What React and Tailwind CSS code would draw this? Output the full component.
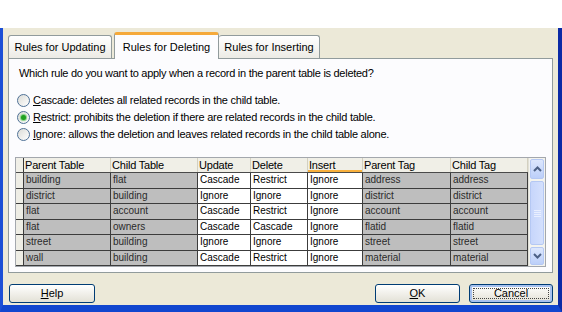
import React from 'react';

const cols = [
  { name: 'Parent Table', w: 'w-[87px]', gray: true },
  { name: 'Child Table', w: 'w-[87px]', gray: true },
  { name: 'Update', w: 'w-[53px]', gray: false },
  { name: 'Delete', w: 'w-[57px]', gray: false },
  { name: 'Insert', w: 'w-[55px]', gray: false, hover: true },
  { name: 'Parent Tag', w: 'w-[88px]', gray: true },
  { name: 'Child Tag', w: 'w-[77px]', gray: true },
];

const rows = [
  ['building', 'flat', 'Cascade', 'Restrict', 'Ignore', 'address', 'address'],
  ['district', 'building', 'Ignore', 'Ignore', 'Ignore', 'district', 'district'],
  ['flat', 'account', 'Cascade', 'Restrict', 'Ignore', 'account', 'account'],
  ['flat', 'owners', 'Cascade', 'Cascade', 'Ignore', 'flatid', 'flatid'],
  ['street', 'building', 'Ignore', 'Ignore', 'Ignore', 'street', 'street'],
  ['wall', 'building', 'Cascade', 'Restrict', 'Ignore', 'material', 'material'],
];

function Radio({ checked, mnemonic, rest }) {
  return (
    <div className="flex items-center h-[13px] ml-[8px]">
      <div className="w-[13px] h-[13px] rounded-full border border-[#4f7196] bg-gradient-to-br from-[#dcdcd7] to-white flex items-center justify-center">
        {checked && <div className="w-[5px] h-[5px] rounded-full bg-[#21a121] shadow-[0_0_1px_1px_#7fd07f]" />}
      </div>
      <span className="ml-[3px] text-[11px] tracking-[-0.25px] leading-[13px]">
        <span className="underline">{mnemonic}</span>
        {rest}
      </span>
    </div>
  );
}

function XpButton({ children, className, isDefault }) {
  return (
    <div
      className={`relative h-[19px] rounded-[3px] border border-[#003c74] bg-gradient-to-b from-white to-[#e3e1d6] flex items-center justify-center text-[11px] ${className} ${isDefault ? 'shadow-[inset_0_0_0_2px_#a7c1ef]' : ''}`}
    >
      {isDefault && <span className="absolute inset-[3px] border border-dotted border-[#444]" />}
      {children}
    </div>
  );
}

function ScrollArrow({ up }) {
  return (
    <svg width="9" height="6" viewBox="0 0 9 6">
      <path
        d={up ? 'M1 5 L4.5 1.5 L8 5' : 'M1 1 L4.5 4.5 L8 1'}
        fill="none"
        stroke="#4d6185"
        strokeWidth="2"
      />
    </svg>
  );
}

export default function App() {
  return (
    <div className="w-[562px] h-[312px] bg-white flex flex-col overflow-hidden font-['Liberation_Sans',Arial,sans-serif] text-black">
      <div className="h-[28px] shrink-0" />
      <div className="flex-1 flex flex-col bg-[#ece9d8] border-l-[3px] border-l-[#1c4fd6] border-r-[4px] border-r-[#0b2aa5] border-b-[7px] border-b-[#1146cf]">
        {/* tabs */}
        <div className="flex items-end ml-[5px] mt-[4px] h-[26px] relative z-10">
          <div className="w-[104px] h-[23px] rounded-t-[3px] border border-b-0 border-[#919b9c] bg-gradient-to-b from-white to-[#ecebe5] flex items-center justify-center text-[11px]">
            Rules for Updating
          </div>
          <div className="ml-[2px] w-[105px] h-[27px] -mb-px rounded-t-[3px] border-x border-[#919b9c] border-t-[3px] border-t-[#f5a93a] bg-[#fcfcfe] flex items-center justify-center text-[11px]">
            Rules for Deleting
          </div>
          <div className="w-[101px] h-[23px] rounded-t-[3px] border border-b-0 border-l-0 border-[#919b9c] bg-gradient-to-b from-white to-[#ecebe5] flex items-center justify-center text-[11px]">
            Rules for Inserting
          </div>
        </div>

        {/* panel */}
        <div className="mx-[5px] h-[215px] border border-[#919b9c] bg-[#fcfcfe] flex flex-col px-[6px]">
          <div className="mt-[8px] ml-[4px] text-[11px] tracking-[-0.28px] leading-[13px]">
            Which rule do you want to apply when a record in the parent table is deleted?
          </div>
          <div className="mt-[14px] flex flex-col gap-[4px] -ml-[6px]">
            <Radio mnemonic="C" rest="ascade: deletes all related records in the child table." />
            <Radio checked mnemonic="R" rest="estrict: prohibits the deletion if there are related records in the child table." />
            <Radio mnemonic="I" rest="gnore: allows the deletion and leaves related records in the child table alone." />
          </div>

          {/* grid */}
          <div className="mt-[16px] flex border border-[#a3a7ad] bg-white">
            <div className="w-[512px] flex flex-col">
              <div className="flex h-[15px] bg-[#f0efe7] border-b border-[#4a4a4a]">
                <div className="w-[8px] border-r border-[#3a3a3a]" />
                {cols.map((c) => (
                  <div key={c.name} className={`${c.w} flex flex-col border-r border-[#d3d0c0]`}>
                    <div className="flex-1 pl-[1px] text-[11px] tracking-[-0.2px] leading-[14px] whitespace-nowrap overflow-hidden">
                      {c.name}
                    </div>
                    {c.hover && <div className="h-[2px] bg-[#f8b03c]" />}
                  </div>
                ))}
              </div>
              {rows.map((r, i) => (
                <div key={i} className="flex h-[15.5px] border-b border-[#3c3c3c]">
                  <div className="w-[8px] bg-[#eeede5] border-r border-[#3a3a3a]" />
                  {r.map((v, j) => (
                    <div
                      key={j}
                      className={`${cols[j].w} border-r border-[#3c3c3c] pl-[2px] text-[10px] leading-[14px] whitespace-nowrap overflow-hidden ${cols[j].gray ? 'bg-[#bebebe] text-[#2a2a2a]' : 'bg-white text-black'}`}
                    >
                      {v}
                    </div>
                  ))}
                </div>
              ))}
            </div>
            {/* scrollbar */}
            <div className="w-[17px] flex flex-col bg-[#f3f3ee] border-l border-[#e0dfd6]">
              <div className="h-[20px] m-px rounded-[2px] border border-[#b5c8f3] bg-gradient-to-b from-[#dde7fd] to-[#bccff9] flex items-center justify-center">
                <ScrollArrow up />
              </div>
              <div className="flex-1 mx-px my-[1px] rounded-[2px] border border-[#b5c8f3] bg-gradient-to-r from-[#c7d6fb] to-[#d4e0fd] flex flex-col items-center justify-center gap-[1px]">
                <div className="w-[7px] h-px bg-[#e9efff]" />
                <div className="w-[7px] h-px bg-[#e9efff]" />
                <div className="w-[7px] h-px bg-[#e9efff]" />
                <div className="w-[7px] h-px bg-[#e9efff]" />
              </div>
              <div className="h-[18px] m-px rounded-[2px] border border-[#b5c8f3] bg-gradient-to-b from-[#dde7fd] to-[#bccff9] flex items-center justify-center">
                <ScrollArrow />
              </div>
            </div>
          </div>
        </div>

        {/* buttons */}
        <div className="flex mt-[11px] mx-[5px]">
          <XpButton className="ml-[1px] w-[86px]">
            <span>
              <span className="underline">H</span>elp
            </span>
          </XpButton>
          <div className="flex-1" />
          <XpButton className="w-[85px]">
            <span>
              <span className="underline">O</span>K
            </span>
          </XpButton>
          <XpButton className="ml-[9px] w-[84px]" isDefault>
            Cancel
          </XpButton>
        </div>
      </div>
    </div>
  );
}
